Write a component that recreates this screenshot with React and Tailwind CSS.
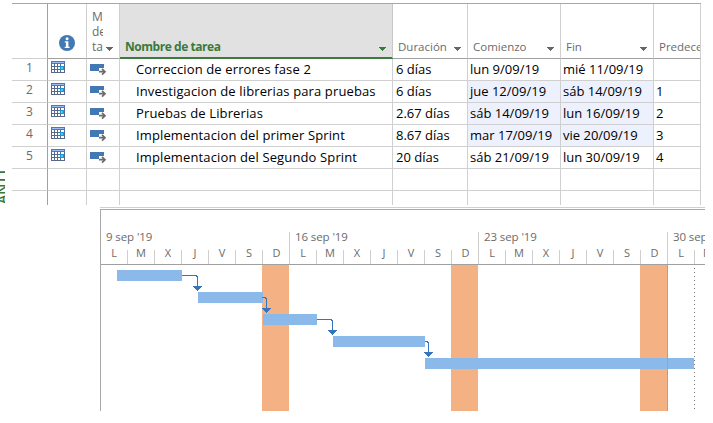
const tasks = [
  ["Correccion de errores fase 2", "6 días", "lun 9/09/19", "mié 11/09/19", "", false],
  ["Investigacion de librerias para pruebas", "6 días", "jue 12/09/19", "sáb 14/09/19", "1", true],
  ["Pruebas de Librerias", "2.67 días", "sáb 14/09/19", "lun 16/09/19", "2", true],
  ["Implementacion del primer Sprint", "8.67 días", "mar 17/09/19", "vie 20/09/19", "3", true],
  ["Implementacion del Segundo Sprint", "20 días", "sáb 21/09/19", "lun 30/09/19", "4", false],
];

const columns = "grid w-[689px] grid-cols-[36px_39px_33px_273px_75px_93px_93px_47px]";

const Caret = ({ className = "text-[#666]" }) => (
  <svg className={`shrink-0 ${className}`} width="8" height="4" shapeRendering="crispEdges">
    <path d="M0 0H8L4 4Z" fill="currentColor" />
  </svg>
);

const InfoIcon = () => (
  <svg width="16" height="16" viewBox="0 0 16 16">
    <circle cx="8" cy="8" r="8" fill="#4379b3" />
    <circle cx="8.1" cy="3.7" r="1.5" fill="#fff" />
    <path d="M5.8 6.2h3.6v5.6h1.2V13H5.7v-1.2h1.2V7.4H5.8z" fill="#fff" />
  </svg>
);

const CalendarIcon = () => (
  <svg width="14" height="12" shapeRendering="crispEdges">
    <rect width="14" height="12" fill="#56698c" />
    <rect width="14" height="3" fill="#4b74cf" />
    <rect x="1" y="1" width="12" height="1" fill="#9dbcf5" />
    {[3, 6, 9].map((y) =>
      [1, 4, 7, 10].map((x) => <rect key={`${x}-${y}`} x={x} y={y} width={x === 10 ? 3 : 2} height="2" fill="#fff" />)
    )}
    <rect x="9" y="5" width="4" height="4" fill="#1796dc" />
    <rect x="10" y="6" width="2" height="2" fill="#42cdf8" />
  </svg>
);

const ModeIcon = () => (
  <svg width="17" height="12" viewBox="0 0 17 12">
    <path d="M0 0H14V4H9V7H0Z" fill="#4379b3" />
    <path d="M9 7.7H14.5M12 4.8L15 7.7L12 10.6" fill="none" stroke="#6b6b6b" strokeWidth="1.7" />
  </svg>
);

const Cell = ({ children, className = "" }) => (
  <div className={`flex overflow-hidden border-r border-b border-[#d0d0d0] whitespace-nowrap ${className}`}>{children}</div>
);

function HeadCell({ label, caret = true, className = "" }) {
  return (
    <Cell className={`items-end justify-between border-b-[#a0a0a0] pr-[6px] pb-[2px] pl-[5px] text-[11.5px] text-[#6b6b6b] ${className}`}>
      <span className="leading-[18px]">{label}</span>
      {caret && <span className="pb-[5px]"><Caret /></span>}
    </Cell>
  );
}

function TaskTable() {
  return (
    <div className="ml-3 h-[202px] overflow-hidden">
      <div className={`${columns} h-[56px] border-t border-[#a8a8a8]`}>
        <Cell className="border-r-[#a0a0a0] border-b-[#d0d0d0]" />
        <Cell className="border-b-[#a0a0a0] pt-[31px] pl-[11px]"><InfoIcon /></Cell>
        <Cell className="items-end border-b-[#a0a0a0] pb-[4px] pl-[5px] text-[12px] leading-[15px] text-[#6b6b6b]">
          <div className="w-[11px] overflow-hidden">M<br />de<br />ta</div>
          <span className="ml-[2px] pb-[3px]"><Caret /></span>
        </Cell>
        <div className="flex items-end justify-between border-r border-b-2 border-r-[#c8c8c8] border-b-[#3d7a3d] bg-[#e1e1e1] pr-[6px] pb-[1px] pl-[5px] text-[12px] font-bold tracking-[-0.45px] text-[#397a3c]">
          <span className="leading-[18px]">Nombre de tarea</span>
          <span className="pb-[5px]"><Caret className="text-[#397a3c]" /></span>
        </div>
        <HeadCell label="Duración" />
        <HeadCell label="Comienzo" />
        <HeadCell label="Fin" />
        <HeadCell label="Predece" caret={false} className="pr-0" />
      </div>
      {tasks.map(([name, duration, start, end, previous, changed], i) => (
        <div key={name} className={`${columns} h-[22px] text-[13px] leading-[21px]`}>
          <Cell className="justify-center border-r-[#a0a0a0] text-[12px] leading-[18px] text-[#6b6b6b]">{i + 1}</Cell>
          <Cell className="pt-[2px] pl-[3px]"><CalendarIcon /></Cell>
          <Cell className="pt-[5px] pl-[3px]"><ModeIcon /></Cell>
          <Cell className="pl-4 tracking-[0.13px]">{name}</Cell>
          <Cell className="pl-[3px]">{duration}</Cell>
          <Cell className={changed ? "bg-[#edf1fd] pl-[2px]" : "pl-[2px]"}>{start}</Cell>
          <Cell className={changed ? "bg-[#edf1fd] pl-[2px]" : "pl-[2px]"}>{end}</Cell>
          <Cell className="pl-[2px]">{previous}</Cell>
        </div>
      ))}
      {[0, 1].map((row) => (
        <div key={row} className={`${columns} h-[22px]`}>
          {[0, 1, 2, 3, 4, 5, 6, 7].map((c) => <Cell key={c} className={c === 0 ? "border-r-[#a0a0a0]" : ""} />)}
        </div>
      ))}
    </div>
  );
}

const days = ["L", "M", "X", "J", "V", "S", "D"];
const bars = [[16, 5, 65], [97, 27, 65], [162, 49, 54], [232, 71, 92], [324, 93, 269]];
const links = [[81, 10, 97, 22], [161, 32, 166, 44], [216, 54, 232, 66], [324, 76, 328, 88]];

function Gantt() {
  return (
    <div className="mt-[2px] ml-[100px] w-[605px] border-t border-[#d0d0d0] pt-px">
      <div className="h-[202px] overflow-hidden border-t border-l border-[#a8a8a8]">
        <div className="flex h-[55px] items-end border-b border-[#a0a0a0] text-[#6b6b6b]">
          {["9 sep '19", "16 sep '19", "23 sep '19", "30 sep '19"].map((week) => (
            <div key={week} className="h-[32px] w-[189px] shrink-0 border-r border-[#cfcfcf]">
              <div className="h-[18px] pl-[5px] text-[11.5px] leading-[10px] tracking-[-0.1px] whitespace-nowrap">{week}</div>
              <div className="flex h-[14px] text-[11px] leading-[5px]">
                {days.map((day) => (
                  <div key={day} className="w-[27px] shrink-0 border-r border-[#cfcfcf] text-center last:border-r-0">{day}</div>
                ))}
              </div>
            </div>
          ))}
        </div>
        <svg className="block" width="604" height="146" shapeRendering="crispEdges">
          {[161, 350, 539].map((x) => <rect key={x} x={x} width="27" height="146" fill="#f4b183" />)}
          {bars.map(([x, y, w]) => <rect key={y} x={x} y={y} width={w} height="11" fill="#8ab9ea" />)}
          <rect x="566" width="1" height="146" fill="#a3ad74" />
          <path d="M593.5 3V146" stroke="#777" strokeDasharray="1 3" />
          {links.map(([x1, y1, x2, y2]) => (
            <g key={y1}>
              <path d={`M${x1} ${y1 + 0.5}H${x2 - 2}L${x2 - 0.5} ${y1 + 2}V${y2 - 1}`} fill="none" stroke="#3675bd" />
              <path d={`M${x2 - 5} ${y2 - 1}H${x2 + 4}L${x2 - 0.5} ${y2 + 4}Z`} fill="#3675bd" />
            </g>
          ))}
        </svg>
      </div>
    </div>
  );
}

export default function App() {
  return (
    <div className="relative h-[423px] w-[713px] overflow-hidden bg-white pt-[3px] font-['Open_Sans','Noto_Sans',sans-serif] text-black">
      <TaskTable />
      <Gantt />
      <div className="absolute top-[170px] left-0 h-[35px] w-[5px] overflow-hidden">
        <span className="absolute top-[-2px] right-[-5px] rotate-180 text-[14px] leading-[16px] font-semibold whitespace-nowrap text-[#397a3c] [writing-mode:vertical-rl]">GANTT</span>
      </div>
    </div>
  );
}
